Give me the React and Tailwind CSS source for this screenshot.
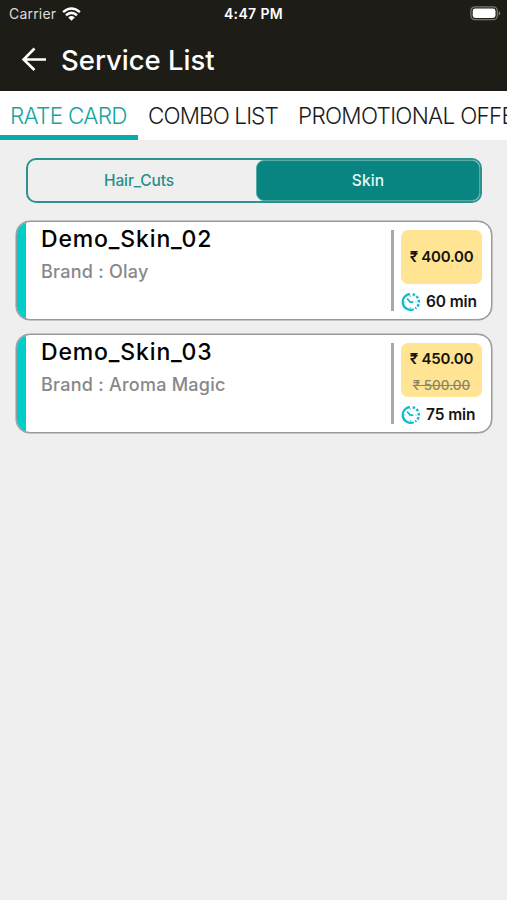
import React from 'react';

function Wifi() {
  return (
    <svg className="ml-[6px] h-[14px] w-[19px]" viewBox="0 0 19 14" fill="none" stroke="#fff" strokeWidth="2.5">
      <path d="M1.1 5.1Q9.5-2.1 17.9 5.1M4 8.3Q9.5 3.5 15 8.3" />
      <path d="M6.2 10.4Q9.5 7.7 12.8 10.4L9.5 13.8Z" fill="#fff" stroke="none" />
    </svg>
  );
}

function Battery() {
  return (
    <svg className="absolute left-[470px] top-[6px] h-[15px] w-[31px]" viewBox="0 0 31 15">
      <rect x="0.9" y="0.9" width="26.4" height="12.8" rx="4" fill="none" stroke="#777672" strokeWidth="1.3" />
      <rect x="2.7" y="2.6" width="22.8" height="9.4" rx="2.4" fill="#fff" />
      <path d="M28.7 5v4.6q1.6-.7 1.6-2.3T28.7 5Z" fill="#777672" />
    </svg>
  );
}

function Clock() {
  return (
    <svg className="h-[20px] w-[20px] shrink-0" viewBox="0 0 20 20" fill="none" stroke="#12bccb">
      <path d="M9 2.1A7.9 7.9 0 1 0 12.8 17.2" strokeWidth="2.3" />
      <path d="M11.6 2.2A7.9 7.9 0 0 1 16.4 14.6" strokeWidth="2.5" strokeDasharray="2.6 1.7" />
      <path d="M15.4 15.6l-1.2 1" strokeWidth="2.2" />
      <path d="M6.1 6.6L9.3 10.1H12.4" strokeWidth="1.8" />
      <path d="M9.5 3.5v1.2M3.2 10h1.2M9.5 15.1v1.2M14.4 10h1" strokeWidth="0.9" />
    </svg>
  );
}

function Card({ name, brand, price, oldPrice, time }) {
  return (
    <article className="flex h-[99px] overflow-hidden rounded-[14px] border border-[#999] bg-white shadow-[0_0_0_0.5px_#999]">
      <div className="w-[9px] shrink-0 bg-[#00cdca]" />
      <div className="min-w-0 flex-1 whitespace-nowrap pl-[15px]">
        <h2 className="mt-[2px] h-[30px] text-[23px] font-medium leading-[30px] tracking-[0.85px] text-black">{name}</h2>
        <p className="mt-[6px] h-[24px] text-[18px] font-medium leading-[24px] tracking-[0.25px] text-[#888]">{brand}</p>
      </div>
      <div className="mt-[8px] h-[81px] w-[3px] shrink-0 bg-[#a9a9a9]" />
      <div className="ml-[7px] mr-[9px] mt-[8px] w-[81px] shrink-0">
        <div className={`flex h-[54px] flex-col items-center whitespace-nowrap rounded-[7px] bg-[#ffe593] ${oldPrice ? 'pt-[5px]' : 'pt-[16px]'}`}>
          <span className="h-[22px] text-[15px] font-semibold leading-[22px] tracking-[-0.25px] text-[#15130c]">{price}</span>
          {oldPrice && <span className="mt-[5px] h-[20px] text-[13.5px] font-medium leading-[20px] text-[#8d8568] line-through">{oldPrice}</span>}
        </div>
        <div className="mt-[8px] flex h-[20px] items-center whitespace-nowrap">
          <Clock />
          <span className="ml-[5px] text-[15.5px] font-semibold leading-[20px] tracking-[-0.1px] text-[#151515]">{time}</span>
        </div>
      </div>
    </article>
  );
}

export default function App() {
  return (
    <div className="h-[900px] w-[507px] overflow-hidden bg-[#efefef] font-['Inter','Noto_Sans',sans-serif]">
      <header className="relative h-[91px] bg-[#1e1c17] text-white">
        <div className="flex h-[27px] items-center pl-[9px]">
          <span className="text-[14px] tracking-[0.2px] text-[#deddda]">Carrier</span>
          <Wifi />
        </div>
        <span className="absolute left-0 top-0 w-full text-center text-[14px] font-semibold leading-[28px] tracking-[0.35px]">4:47 PM</span>
        <Battery />
        <div className="flex h-[64px] items-center pl-[21px]">
          <svg className="h-[26px] w-[26px]" viewBox="0 0 26 26" fill="none" stroke="#fff" strokeWidth="2.6">
            <path d="M13.5 2.5L2.6 13.5L13.5 24M2.6 13.5H25" />
          </svg>
          <h1 className="ml-[14px] whitespace-nowrap pt-px text-[27.5px] font-medium leading-[40px]">Service List</h1>
        </div>
      </header>
      <nav className="relative flex h-[49px] overflow-hidden whitespace-nowrap bg-white text-[22.5px] font-light leading-[50px] text-[#1b1b1b]">
        <div className="h-[49px] w-[138px] shrink-0 border-b-[5px] border-[#09aaa8] pl-[10px] tracking-[-0.7px] text-[#16a4a1]">RATE CARD</div>
        <div className="w-[160px] shrink-0 pl-[10px] tracking-[-0.9px]">COMBO LIST</div>
        <div className="shrink-0 tracking-[-0.7px]">PROMOTIONAL OFFERS</div>
      </nav>
      <main className="px-[16px] pt-[18px]">
        <div className="ml-[10px] flex h-[45px] w-[456px] rounded-[10px] border-2 border-[#2e918d] text-center text-[15.5px] font-medium leading-[42px]">
          <div className="w-[228px] pr-[6px] tracking-[-0.1px] text-[#24908b]">Hair_Cuts</div>
          <div className="w-[224px] rounded-[8px] border border-[#58aaa7] bg-[#088481] leading-[40px] tracking-[0.15px] text-[#e7f8f6]">Skin</div>
        </div>
        <div className="mt-[18px] flex w-[476px] flex-col gap-[14px]">
          <Card name="Demo_Skin_02" brand="Brand : Olay" price="₹ 400.00" time="60 min" />
          <Card name="Demo_Skin_03" brand="Brand : Aroma Magic" price="₹ 450.00" oldPrice="₹ 500.00" time="75 min" />
        </div>
      </main>
    </div>
  );
}
